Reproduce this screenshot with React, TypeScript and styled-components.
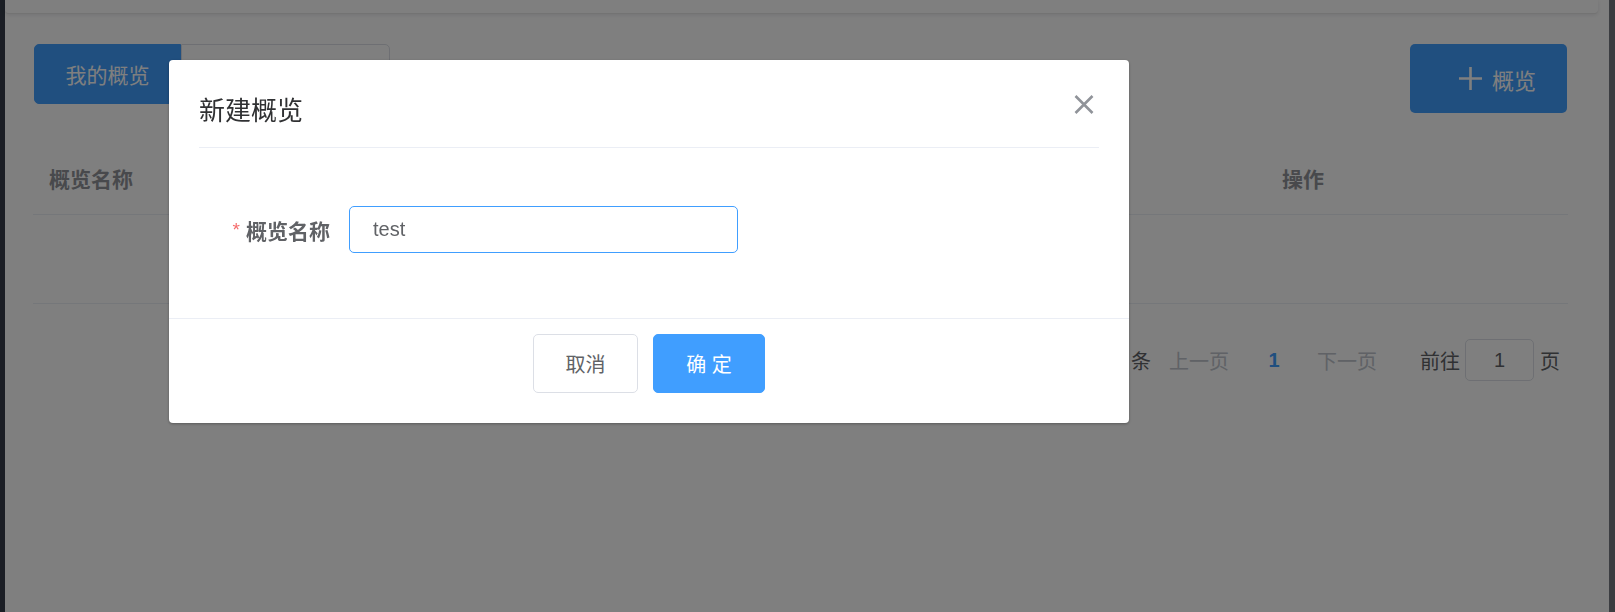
import React from 'react';
import styled, { createGlobalStyle } from 'styled-components';

const GlobalStyle = createGlobalStyle`
  html, body { margin: 0; padding: 0; width: 1615px; height: 612px; overflow: hidden; background: #fff; }
  * { box-sizing: border-box; }
  body { font-family: "Liberation Sans", "Noto Sans CJK SC", sans-serif; }
`;

const Shell = styled.div`
  display: flex;
  height: 612px;
`;

const Sidebar = styled.aside`
  width: 5px;
  background: #363d4a;
`;

const Main = styled.main`
  flex: 1;
  display: flex;
  flex-direction: column;
  background: #fff;
`;

const ScrollStrip = styled.div`
  width: 6px;
  background: #777b82;
`;

const TopBar = styled.header`
  height: 14px;
  margin-right: 11px;
  background: #fff;
  border-bottom: 1px solid #e6e6e6;
  box-shadow: 0 1px 4px rgba(0, 21, 41, 0.1);
  border-radius: 0 0 4px 4px;
`;

const Content = styled.div`
  padding: 30px 41px 0 28px;
  display: flex;
  flex-direction: column;
`;

const Toolbar = styled.div`
  display: flex;
  justify-content: space-between;
  align-items: flex-start;
`;

const TabGroup = styled.div`
  display: flex;
  margin-left: 1px;
`;

const Tab = styled.div<{ $active?: boolean; $width: number; $first?: boolean }>`
  width: ${(p) => p.$width}px;
  height: 60px;
  display: flex;
  align-items: center;
  justify-content: center;
  font-size: 21px;
  color: ${(p) => (p.$active ? '#fff' : '#606266')};
  background: ${(p) => (p.$active ? '#409eff' : '#fff')};
  border: 1px solid ${(p) => (p.$active ? '#409eff' : '#dcdfe6')};
  border-radius: ${(p) => (p.$first ? '5px 0 0 5px' : '0 5px 5px 0')};
`;

const AddButton = styled.button`
  width: 157px;
  height: 69px;
  margin-right: 1px;
  display: flex;
  align-items: center;
  gap: 9px;
  padding: 0 0 0 48px;
  border: none;
  border-radius: 5px;
  background: #409eff;
  color: #fff;
  font-family: inherit;
  font-size: 22px;
`;

const Table = styled.div`
  margin-top: 29px;
  display: flex;
  flex-direction: column;
`;

const Row = styled.div<{ $height: number }>`
  display: grid;
  grid-template-columns: 1fr 302px;
  height: ${(p) => p.$height}px;
  align-items: center;
  border-bottom: 1px solid #ebeef5;
`;

const HeadCell = styled.div`
  padding-left: 16px;
  font-size: 21px;
  font-weight: 700;
  color: #909399;
`;

const EmptyRow = styled.div`
  height: 89px;
  display: flex;
  align-items: center;
  justify-content: center;
  border-bottom: 1px solid #ebeef5;
  font-size: 20px;
  color: #909399;
`;

const Pagination = styled.div`
  margin-top: 35px;
  height: 42px;
  padding-right: 8px;
  display: flex;
  justify-content: flex-end;
  align-items: center;
  font-size: 20px;
  color: #606266;
`;

const PageText = styled.span<{ $muted?: boolean; $gap?: number }>`
  margin-left: ${(p) => p.$gap ?? 0}px;
  color: ${(p) => (p.$muted ? '#c0c4cc' : '#606266')};
  white-space: nowrap;
`;

const PageNumber = styled.span`
  margin-left: 24px;
  width: 42px;
  text-align: center;
  color: #409eff;
  font-weight: 700;
`;

const JumpBox = styled.div`
  width: 69px;
  height: 42px;
  margin: 0 6px 0 5px;
  border: 1px solid #dcdfe6;
  border-radius: 5px;
  display: flex;
  align-items: center;
  justify-content: center;
  color: #606266;
  font-size: 20px;
`;

const Overlay = styled.div`
  position: fixed;
  inset: 0;
  background: rgba(0, 0, 0, 0.5);
  padding: 60px 0 0 169px;
`;

const Dialog = styled.div`
  width: 960px;
  background: #fff;
  border-radius: 4px;
  box-shadow: 0 1px 3px rgba(0, 0, 0, 0.3);
  display: flex;
  flex-direction: column;
`;

const DialogHeader = styled.div`
  height: 88px;
  margin: 0 30px;
  display: flex;
  align-items: center;
  justify-content: space-between;
  border-bottom: 1px solid #ebeef5;
`;

const Title = styled.span`
  padding-top: 9px;
  font-size: 26px;
  color: #303133;
  font-family: "Noto Sans CJK SC", sans-serif;
`;

const CloseButton = styled.button`
  margin: 2px 5px 0 0;
  padding: 0;
  border: none;
  background: none;
  display: flex;
`;

const DialogBody = styled.div`
  padding: 58px 30px 65px;
`;

const FormRow = styled.div`
  display: flex;
  align-items: center;
`;

const Label = styled.label`
  width: 150px;
  padding-right: 19px;
  text-align: right;
  font-size: 21px;
  font-weight: 700;
  color: #606266;
`;

const Required = styled.span`
  color: #f56c6c;
  font-weight: 400;
  font-size: 19px;
  margin-right: 6px;
  vertical-align: 3px;
`;

const TextInput = styled.input`
  width: 389px;
  height: 47px;
  padding: 0 23px;
  border: 1px solid #409eff;
  border-radius: 5px;
  outline: none;
  font-family: inherit;
  font-size: 20px;
  color: #606266;
  background: #fff;
`;

const DialogFooter = styled.div`
  border-top: 1px solid #ebeef5;
  padding: 15px 0 30px;
  display: flex;
  justify-content: center;
  gap: 15px;
`;

const FooterButton = styled.button<{ $primary?: boolean; $width: number }>`
  width: ${(p) => p.$width}px;
  height: 59px;
  padding: 0;
  border-radius: 5px;
  border: 1px solid ${(p) => (p.$primary ? '#409eff' : '#dcdfe6')};
  background: ${(p) => (p.$primary ? '#409eff' : '#fff')};
  color: ${(p) => (p.$primary ? '#fff' : '#606266')};
  font-family: inherit;
  font-size: 20px;
`;

const PlusIcon = () => (
  <svg width="25" height="25" viewBox="0 0 25 25" aria-hidden="true">
    <path d="M12.5 1v23M1 12.5h23" stroke="#fff" strokeWidth="2.6" fill="none" />
  </svg>
);

const CloseIcon = () => (
  <svg width="20" height="19" viewBox="0 0 20 19" aria-hidden="true">
    <path d="M1.5 1L18.5 18M18.5 1L1.5 18" stroke="#909399" strokeWidth="2.6" fill="none" />
  </svg>
);

export default function App() {
  return (
    <>
      <GlobalStyle />
      <Shell>
        <Sidebar />
        <Main>
          <TopBar />
          <Content>
            <Toolbar>
              <TabGroup>
                <Tab $active $first $width={147}>我的概览</Tab>
                <Tab $width={209}>共享给我的</Tab>
              </TabGroup>
              <AddButton>
                <PlusIcon />
                概览
              </AddButton>
            </Toolbar>
            <Table>
              <Row $height={73}>
                <HeadCell>概览名称</HeadCell>
                <HeadCell>操作</HeadCell>
              </Row>
              <EmptyRow>暂无数据</EmptyRow>
            </Table>
            <Pagination>
              <PageText>共 0 条</PageText>
              <PageText $muted $gap={18}>上一页</PageText>
              <PageNumber>1</PageNumber>
              <PageText $muted $gap={22}>下一页</PageText>
              <PageText $gap={43}>前往</PageText>
              <JumpBox>1</JumpBox>
              <PageText>页</PageText>
            </Pagination>
          </Content>
        </Main>
        <ScrollStrip />
      </Shell>
      <Overlay>
        <Dialog>
          <DialogHeader>
            <Title>新建概览</Title>
            <CloseButton aria-label="关闭">
              <CloseIcon />
            </CloseButton>
          </DialogHeader>
          <DialogBody>
            <FormRow>
              <Label>
                <Required>*</Required>概览名称
              </Label>
              <TextInput defaultValue="test" />
            </FormRow>
          </DialogBody>
          <DialogFooter>
            <FooterButton $width={105}>取消</FooterButton>
            <FooterButton $primary $width={112}>确 定</FooterButton>
          </DialogFooter>
        </Dialog>
      </Overlay>
    </>
  );
}
